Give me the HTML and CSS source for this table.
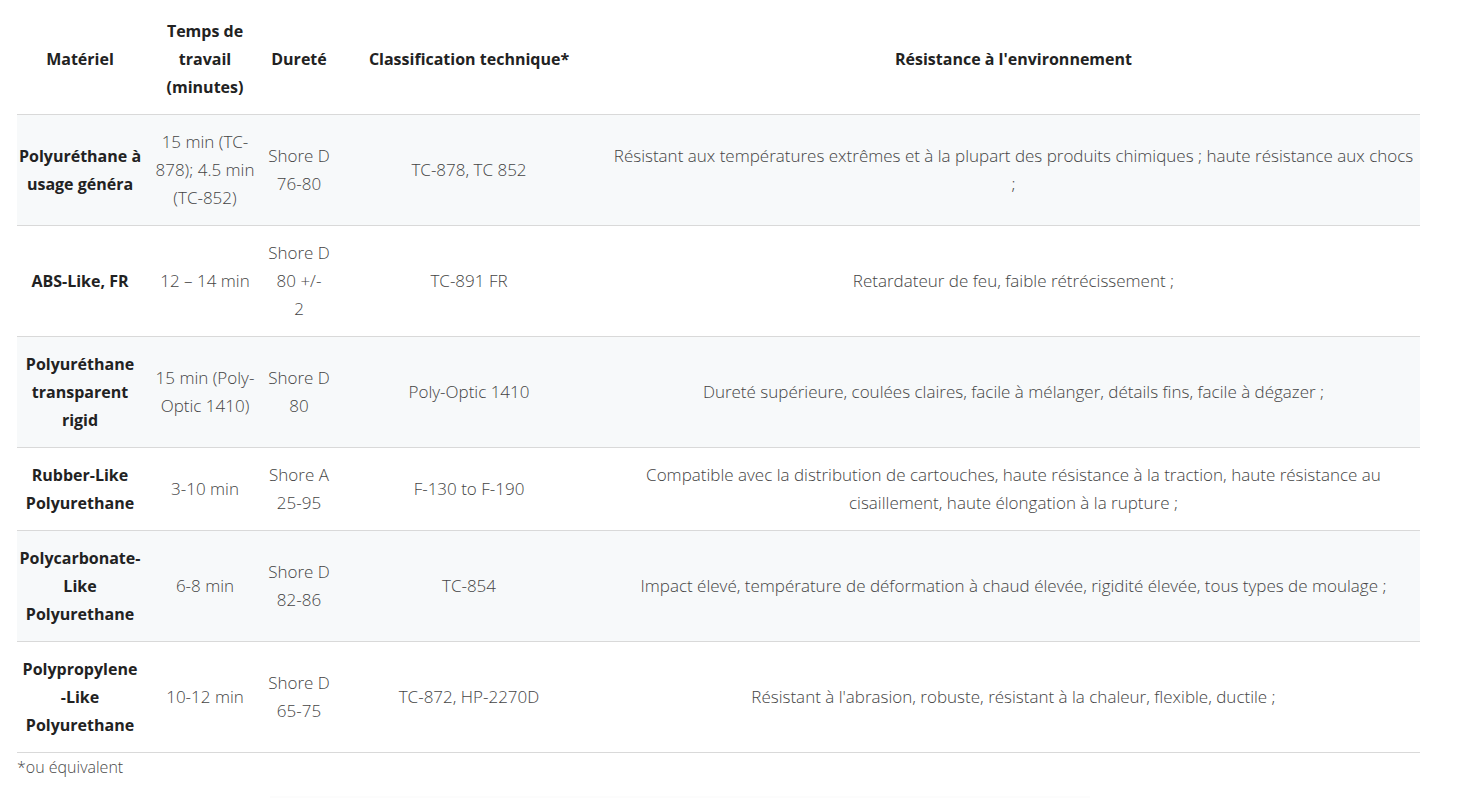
FILE: index.html
```html
<!DOCTYPE html>
<html lang="fr">
<head>
<meta charset="utf-8">
<title>Matériaux</title>
<link rel="stylesheet" href="styles.css">
</head>
<body>
<div class="wrap">
  <table class="spec">
    <colgroup>
      <col class="c1"><col class="c2"><col class="c3"><col class="c4"><col class="c5">
    </colgroup>
    <thead>
      <tr>
        <th>Matériel</th>
        <th>Temps de travail (minutes)</th>
        <th>Dureté</th>
        <th>Classification technique*</th>
        <th>Résistance à l'environnement</th>
      </tr>
    </thead>
    <tbody>
      <tr class="alt">
        <td class="name">Polyuréthane à usage généra</td>
        <td>15 min (TC-878); 4.5 min (TC-852)</td>
        <td>Shore D 76-80</td>
        <td>TC-878, TC 852</td>
        <td class="env">Résistant aux températures extrêmes et à la plupart des produits chimiques ; haute résistance aux chocs ;</td>
      </tr>
      <tr>
        <td class="name">ABS-Like, FR</td>
        <td>12 – 14 min</td>
        <td>Shore D 80 +/-<br>2</td>
        <td>TC-891 FR</td>
        <td class="env">Retardateur de feu, faible rétrécissement ;</td>
      </tr>
      <tr class="alt">
        <td class="name">Polyuréthane transparent rigid</td>
        <td>15 min (Poly-Optic 1410)</td>
        <td>Shore D 80</td>
        <td>Poly-Optic 1410</td>
        <td class="env">Dureté supérieure, coulées claires, facile à mélanger, détails fins, facile à dégazer ;</td>
      </tr>
      <tr>
        <td class="name">Rubber-Like Polyurethane</td>
        <td>3-10 min</td>
        <td>Shore A 25-95</td>
        <td>F-130 to F-190</td>
        <td class="env">Compatible avec la distribution de cartouches, haute résistance à la traction, haute résistance au cisaillement, haute élongation à la rupture ;</td>
      </tr>
      <tr class="alt">
        <td class="name">Polycarbonate-Like Polyurethane</td>
        <td>6-8 min</td>
        <td>Shore D 82-86</td>
        <td>TC-854</td>
        <td class="env">Impact élevé, température de déformation à chaud élevée, rigidité élevée, tous types de moulage ;</td>
      </tr>
      <tr>
        <td class="name">Polypropylene<br>-Like Polyurethane</td>
        <td>10-12 min</td>
        <td>Shore D 65-75</td>
        <td>TC-872, HP-2270D</td>
        <td class="env">Résistant à l'abrasion, robuste, résistant à la chaleur, flexible, ductile ;</td>
      </tr>
    </tbody>
  </table>
  <p class="note">*ou équivalent</p>
  <div class="fade"></div>
</div>
</body>
</html>
```

FILE: styles.css
```css
html, body {
  margin: 0;
  padding: 0;
  background: #ffffff;
}

body {
  font-family: "Open Sans", "Liberation Sans", sans-serif;
  font-weight: 300;
  font-size: 16px;
  color: #3c3c3c;
}

.wrap {
  padding: 0 37px 0 17px;
}

.spec {
  width: 1403px;
  border-collapse: collapse;
  table-layout: fixed;
}

.c1 { width: 126px; }
.c2 { width: 124px; }
.c3 { width: 64px; }
.c4 { width: 276px; }
.c5 { width: 813px; }

.spec th {
  font-weight: 700;
  color: #222;
  line-height: 28px;
  padding: 17px 0 13px;
  text-align: center;
  vertical-align: middle;
  border-bottom: 1px solid #d9d9d9;
}

.spec td {
  font-size: 17px;
  line-height: 28px;
  padding: 13px 0 13px;
  text-align: center;
  vertical-align: middle;
  border-bottom: 1px solid #d9d9d9;
  color: #444;
}

.spec td.env {
  padding-left: 4px;
  padding-right: 4px;
}

.spec td.name {
  font-size: 16px;
  font-weight: 700;
  color: #222;
}

.spec tr.alt td {
  background: #f7f9fa;
}

.note {
  margin: 0;
  padding-top: 2px;
  line-height: 24px;
  color: #4a4a4a;
}

.fade {
  margin: 17px 0 0 253px;
  width: 820px;
  height: 14px;
  background: #fcfcfc;
}
```
